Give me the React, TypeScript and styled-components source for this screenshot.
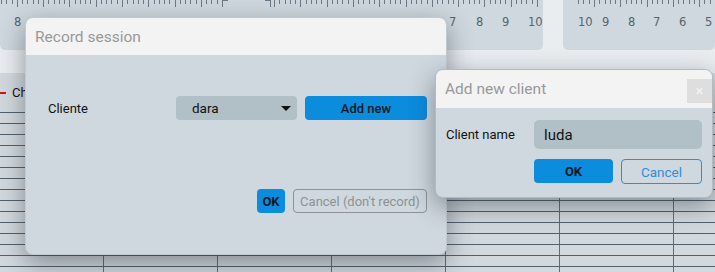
import React from 'react';
import styled, { createGlobalStyle } from 'styled-components';

const GlobalStyle = createGlobalStyle`
  html, body {
    margin: 0;
    padding: 0;
    background: #e9edf0;
    font-family: Roboto, "Liberation Sans", sans-serif;
  }
`;

const TICK = 26.3 / 5;

interface RulerProps {
  width: number;
  segments: { from: number; to: number; origin: number }[];
  labels: { x: number; text: string }[];
}

const Ruler = ({ width, segments, labels }: RulerProps) => {
  const ticks: React.ReactNode[] = [];
  segments.forEach((seg, si) => {
    for (let i = 0; ; i += 1) {
      const x = seg.from + i * TICK;
      if (x > seg.to) break;
      const major = (i + seg.origin) % 5 === 0;
      ticks.push(
        <line
          key={`${si}-${i}`}
          x1={Math.round(x) + 0.5}
          x2={Math.round(x) + 0.5}
          y1={0}
          y2={major ? 7 : 4}
          stroke="#6b7a85"
          strokeWidth={1}
        />,
      );
    }
  });
  return (
    <svg width={width} height={30}>
      {ticks}
      <line x1={222.5} x2={222.5} y1={0} y2={7} stroke="#6b7a85" />
      <line x1={222} x2={228} y1={0.5} y2={0.5} stroke="#6b7a85" />
      <line x1={270.5} x2={270.5} y1={0} y2={7} stroke="#6b7a85" />
      <line x1={265} x2={271} y1={0.5} y2={0.5} stroke="#6b7a85" />
      {labels.map((l) => (
        <RulerText key={`${l.x}-${l.text}`} x={l.x} y={26}>
          {l.text}
        </RulerText>
      ))}
    </svg>
  );
};

const RightRuler = () => {
  const ticks: React.ReactNode[] = [];
  for (let i = 0; i < 30; i += 1) {
    const x = 31 + i * TICK - 5 * TICK;
    if (x < 15) continue;
    ticks.push(
      <line
        key={i}
        x1={Math.round(x) + 0.5}
        x2={Math.round(x) + 0.5}
        y1={0}
        y2={i % 5 === 0 ? 7 : 4}
        stroke="#6b7a85"
      />,
    );
  }
  const labels = ['10', '9', '8', '7', '6', '5'];
  const xs = [15, 39, 65, 90, 116, 142];
  return (
    <svg width={152} height={30}>
      {ticks}
      {labels.map((t, i) => (
        <RulerText key={t} x={xs[i]} y={26}>{t}</RulerText>
      ))}
    </svg>
  );
};

const App = () => (
  <>
    <GlobalStyle />
    <Page>
      <RulerRow>
        <RulerPanel $width={543}>
          <Ruler
            width={543}
            segments={[
              { from: 1, to: 220, origin: 2 },
              { from: 274, to: 540, origin: 0 },
            ]}
            labels={[
              { x: 14, text: '8' },
              { x: 449, text: '7' },
              { x: 476, text: '8' },
              { x: 502, text: '9' },
              { x: 528, text: '10' },
            ]}
          />
        </RulerPanel>
        <RulerPanel $width={152}>
          <RightRuler />
        </RulerPanel>
      </RulerRow>
      <Band />
      <TrackHeader>
        <RedDash />
        <TrackLabel>Ch</TrackLabel>
      </TrackHeader>
      <Grid />

      <Dialog $left={25} $top={17} $width={422}>
        <DialogHeader $height={37}>
          <DialogTitle>Record session</DialogTitle>
        </DialogHeader>
        <RecordBody>
          <FieldRow>
            <FieldLabel>Cliente</FieldLabel>
            <Select>
              <span>dara</span>
              <Caret />
            </Select>
            <PrimaryButton $width={122}>Add new</PrimaryButton>
          </FieldRow>
          <Footer>
            <PrimaryButton $width={28} $bold>OK</PrimaryButton>
            <GhostButton>Cancel (don&apos;t record)</GhostButton>
          </Footer>
        </RecordBody>
      </Dialog>

      <Dialog $left={435} $top={69} $width={278} $bordered>
        <DialogHeader $height={38}>
          <DialogTitle>Add new client</DialogTitle>
          <CloseBox>×</CloseBox>
        </DialogHeader>
        <ClientBody>
          <FieldLabel>Client name</FieldLabel>
          <TextInput>luda</TextInput>
          <span />
          <ButtonPair>
            <PrimaryButton $width={79} $bold>OK</PrimaryButton>
            <OutlineButton>Cancel</OutlineButton>
          </ButtonPair>
        </ClientBody>
      </Dialog>
    </Page>
  </>
);

const Page = styled.div`
  position: relative;
  width: 715px;
  height: 272px;
  overflow: hidden;
  display: flex;
  flex-direction: column;
`;

const RulerRow = styled.div`
  display: flex;
  gap: 20px;
  height: 50px;
  flex-shrink: 0;
`;

const RulerPanel = styled.div<{ $width: number }>`
  width: ${({ $width }) => $width}px;
  flex-shrink: 0;
  background: #cfd8de;
  border-radius: 0 0 5px 5px;
  overflow: hidden;
`;

const RulerText = styled.text`
  font-family: "DejaVu Sans", sans-serif;
  font-size: 11.5px;
  fill: #56656f;
`;

const Band = styled.div`
  height: 23px;
  flex-shrink: 0;
`;

const TrackHeader = styled.div`
  height: 39px;
  flex-shrink: 0;
  display: flex;
  align-items: center;
  gap: 6px;
  background: #d2d9de;
`;

const RedDash = styled.div`
  width: 6px;
  height: 2px;
  background: #e01010;
`;

const TrackLabel = styled.span`
  font-size: 13px;
  color: #111;
`;

const Grid = styled.div`
  flex: 1;
  background-color: #d2d9de;
  background-image:
    linear-gradient(to bottom, #51616c 0, #51616c 1px, transparent 1px),
    linear-gradient(to right, #5c6f79 0, #5c6f79 1px, transparent 1px);
  background-size: 100% 11px, 114px 100%;
  background-position: 0 0, 103px 0;
`;

const Dialog = styled.div<{ $left: number; $top: number; $width: number; $bordered?: boolean }>`
  position: absolute;
  left: ${({ $left }) => $left}px;
  top: ${({ $top }) => $top}px;
  width: ${({ $width }) => $width}px;
  box-sizing: border-box;
  border-radius: 8px;
  overflow: hidden;
  background: #cfd8de;
  border: 1px solid ${({ $bordered }) => ($bordered ? '#b4babe' : '#c3cacf')};
  box-shadow: 0 8px 26px rgba(30, 40, 50, 0.45);
`;

const DialogHeader = styled.div<{ $height: number }>`
  height: ${({ $height }) => $height}px;
  box-sizing: border-box;
  background: #f3f3f3;
  display: flex;
  align-items: center;
  justify-content: space-between;
  padding: 0 0 0 9px;
`;

const DialogTitle = styled.div`
  font-size: 15.5px;
  color: #999;
`;

const CloseBox = styled.div`
  width: 25px;
  height: 24px;
  margin-top: 3px;
  background: #dedede;
  color: #f4f4f4;
  font-size: 14px;
  display: flex;
  align-items: center;
  justify-content: center;
`;

const RecordBody = styled.div`
  height: 199px;
  box-sizing: border-box;
  padding: 41px 19px 0 22px;
  display: flex;
  flex-direction: column;
`;

const FieldRow = styled.div`
  display: flex;
  align-items: center;
  gap: 8px;
`;

const FieldLabel = styled.div`
  flex: 1;
  font-size: 13px;
  color: #111;
`;

const Select = styled.div`
  width: 121px;
  height: 24px;
  box-sizing: border-box;
  padding: 0 6px 0 16px;
  border-radius: 4px;
  background: #b1bfc6;
  display: flex;
  align-items: center;
  justify-content: space-between;
  font-size: 13.5px;
  color: #111;
`;

const Caret = styled.span`
  width: 0;
  height: 0;
  border-left: 5px solid transparent;
  border-right: 5px solid transparent;
  border-top: 5px solid #111;
`;

const PrimaryButton = styled.div<{ $width: number; $bold?: boolean }>`
  width: ${({ $width }) => $width}px;
  height: 24px;
  border-radius: 4px;
  background: #0b8cdd;
  color: #0d1a24;
  font-size: 13px;
  font-weight: ${({ $bold }) => ($bold ? 700 : 500)};
  display: flex;
  align-items: center;
  justify-content: center;
`;

const Footer = styled.div`
  margin-top: 69px;
  display: flex;
  justify-content: flex-end;
  gap: 8px;
`;

const GhostButton = styled.div`
  width: 134px;
  height: 24px;
  box-sizing: border-box;
  border: 1px solid #8d9296;
  border-radius: 4px;
  color: #8e9194;
  font-size: 13px;
  display: flex;
  align-items: center;
  justify-content: center;
`;

const ClientBody = styled.div`
  display: grid;
  grid-template-columns: 88px 168px;
  row-gap: 10px;
  align-items: center;
  padding: 12px 0 13px 10px;
`;

const TextInput = styled.div`
  height: 29px;
  box-sizing: border-box;
  padding-left: 10px;
  border-radius: 5px;
  background: #b1bfc6;
  display: flex;
  align-items: center;
  font-size: 15px;
  color: #111;
`;

const ButtonPair = styled.div`
  display: flex;
  gap: 8px;
`;

const OutlineButton = styled.div`
  width: 81px;
  height: 25px;
  box-sizing: border-box;
  border: 1px solid #2f8fd2;
  border-radius: 4px;
  color: #2e8fd4;
  font-size: 13.5px;
  display: flex;
  align-items: center;
  justify-content: center;
`;

export default App;
